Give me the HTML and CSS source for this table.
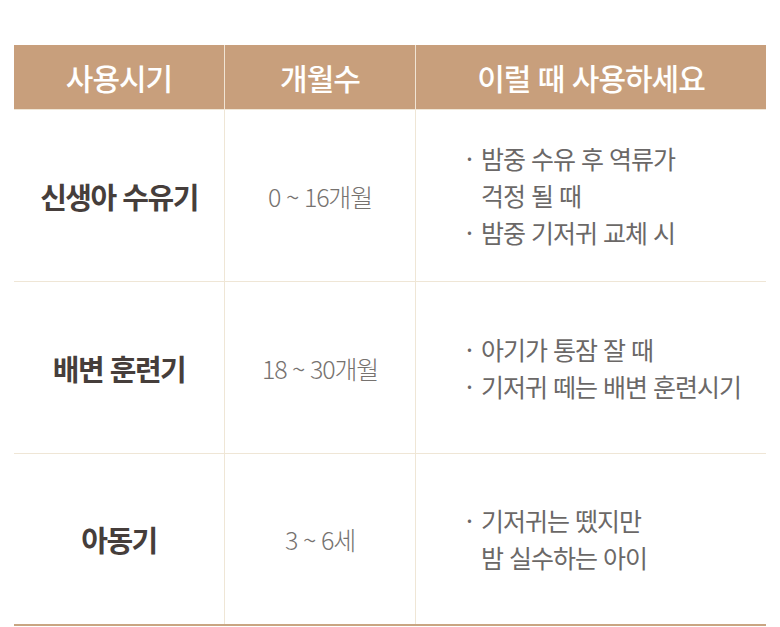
FILE: index.html
```html
<!DOCTYPE html>
<html lang="ko">
<head>
<meta charset="utf-8">
<link rel="stylesheet" href="styles.css">
</head>
<body>
<div class="table">
  <div class="th">사용시기</div>
  <div class="th">개월수</div>
  <div class="th">이럴 때 사용하세요</div>

  <div class="td label">신생아 수유기</div>
  <div class="td months">0 ~ 16개월</div>
  <div class="td uses">
    <ul>
      <li>밤중 수유 후 역류가<br>걱정 될 때</li>
      <li>밤중 기저귀 교체 시</li>
    </ul>
  </div>

  <div class="td label">배변 훈련기</div>
  <div class="td months">18 ~ 30개월</div>
  <div class="td uses">
    <ul>
      <li>아기가 통잠 잘 때</li>
      <li>기저귀 떼는 배변 훈련시기</li>
    </ul>
  </div>

  <div class="td label last">아동기</div>
  <div class="td months last">3 ~ 6세</div>
  <div class="td uses last">
    <ul>
      <li>기저귀는 뗐지만<br>밤 실수하는 아이</li>
    </ul>
  </div>
</div>
</body>
</html>
```

FILE: styles.css
```css
html, body {
  margin: 0;
  padding: 0;
  background: #ffffff;
}
body {
  font-family: "Noto Sans CJK KR", "Noto Sans", sans-serif;
  padding: 45px 14px 0 14px;
}
.table {
  display: grid;
  grid-template-columns: 210px 191px 351px;
  grid-template-rows: 64px 172px 172px 171px;
  width: 752px;
  border-bottom: 2px solid #c9a582;
}
.th {
  background: #c89f7c;
  color: #ffffff;
  font-size: 30px;
  font-weight: 500;
  letter-spacing: -1px;
  display: flex;
  align-items: center;
  justify-content: center;
  border-left: 1px solid #f1e4d4;
}
.th:first-child {
  border-left: none;
}
.td {
  display: flex;
  align-items: center;
  border-left: 1px solid #efe6d6;
  border-top: 1px solid #efe6d6;
}
.td.label {
  border-left: none;
  justify-content: center;
  font-size: 29px;
  font-weight: 700;
  color: #463e3b;
  letter-spacing: -1.5px;
}
.td.months {
  justify-content: center;
  font-size: 25px;
  font-weight: 300;
  color: #76726f;
  letter-spacing: -1.2px;
}
.td.uses {
  padding-left: 50px;
  font-size: 25px;
  color: #6b6867;
  letter-spacing: -1px;
  line-height: 37px;
}
.td.uses ul {
  list-style: none;
  margin: 0;
  padding: 0;
}
.td.uses li {
  position: relative;
  padding-left: 15px;
}
.td.uses li::before {
  content: "·";
  position: absolute;
  left: 0;
  top: 0;
}
```
